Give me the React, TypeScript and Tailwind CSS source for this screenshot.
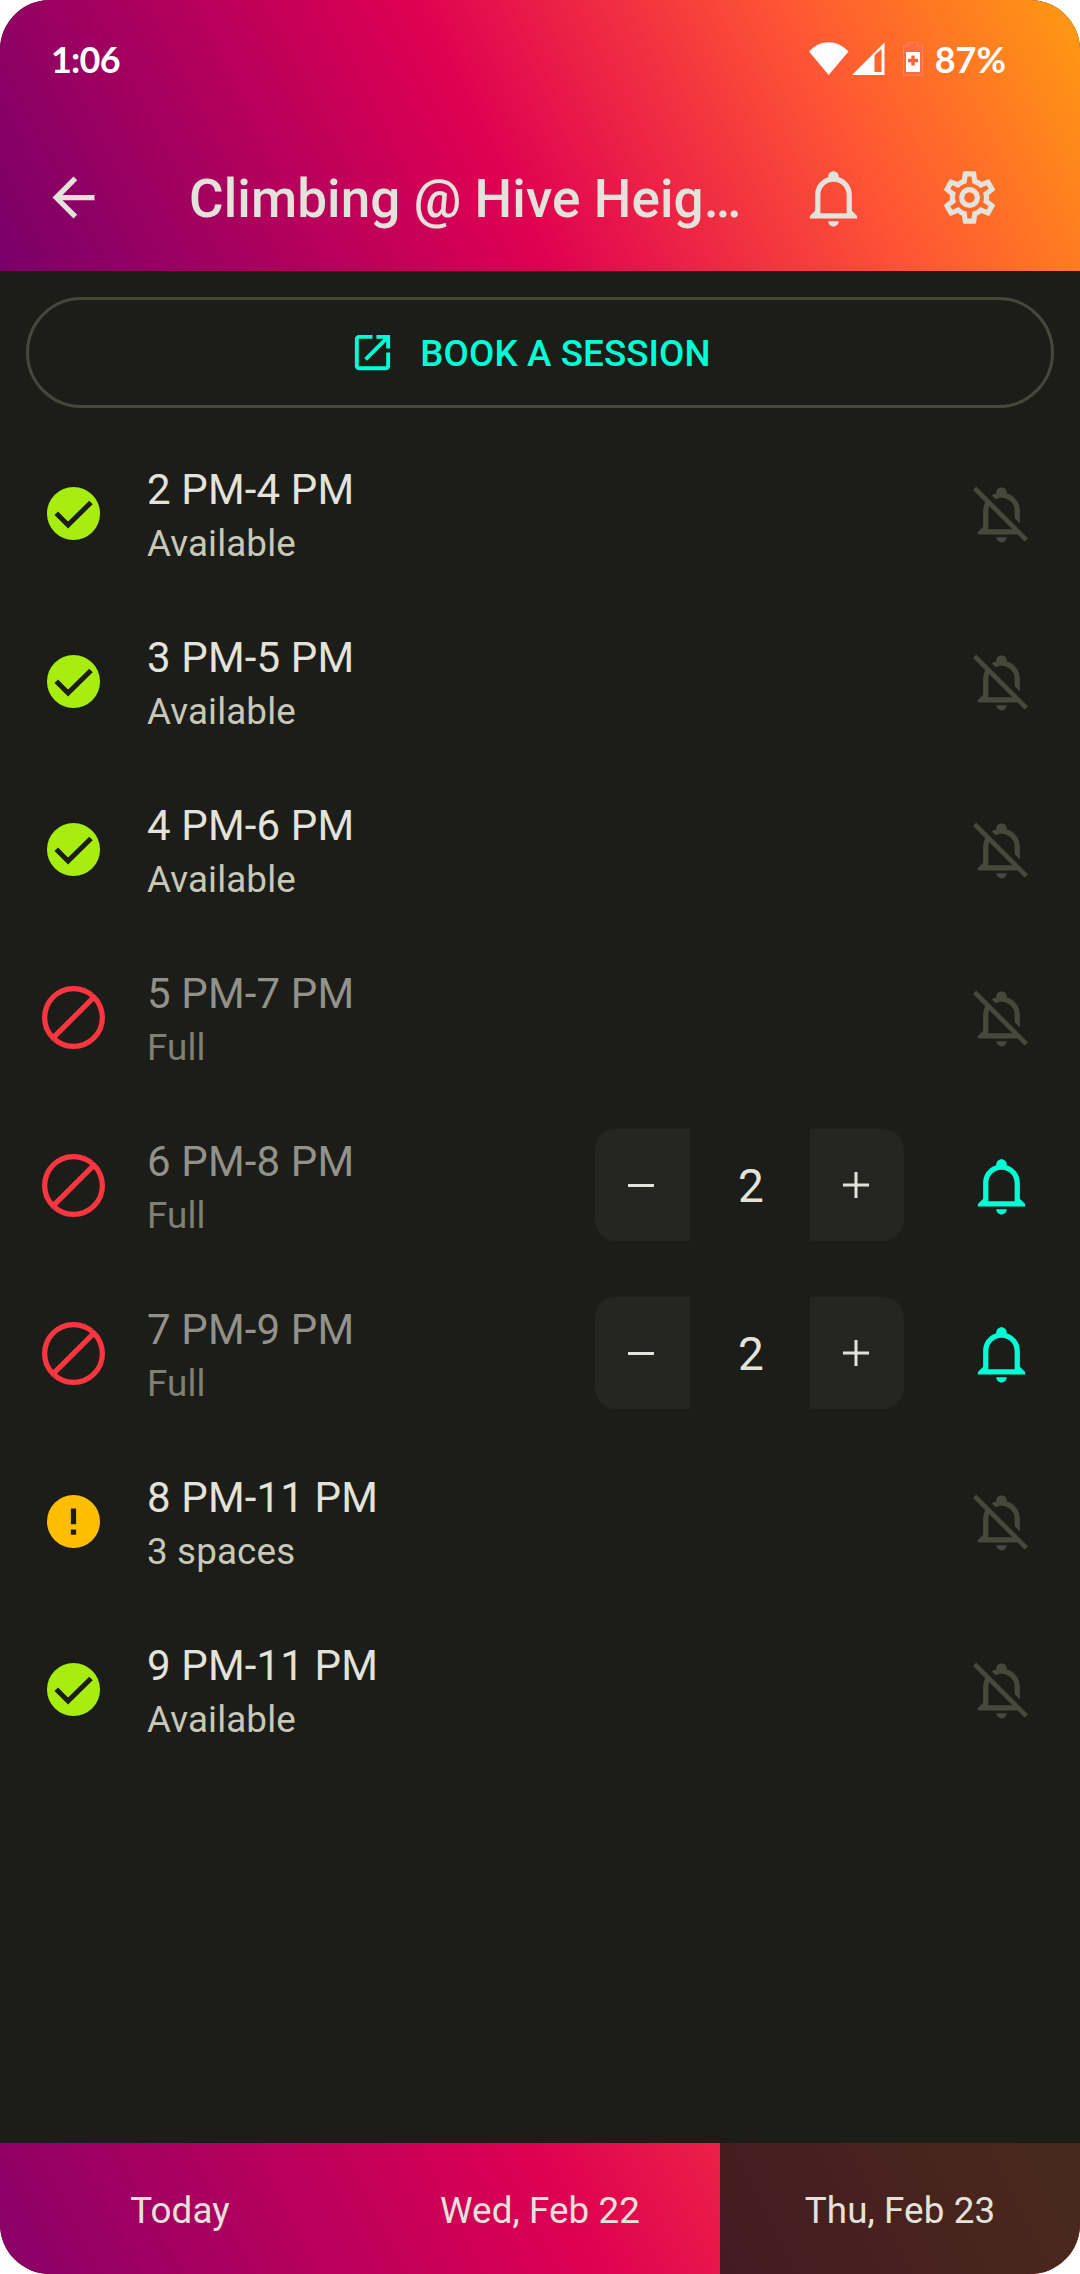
import React from "react";

type Status = "available" | "full" | "limited";
type Slot = { time: string; note: string; status: Status; watching?: number };

const slots: Slot[] = [
  { time: "2 PM-4 PM", note: "Available", status: "available" },
  { time: "3 PM-5 PM", note: "Available", status: "available" },
  { time: "4 PM-6 PM", note: "Available", status: "available" },
  { time: "5 PM-7 PM", note: "Full", status: "full" },
  { time: "6 PM-8 PM", note: "Full", status: "full", watching: 2 },
  { time: "7 PM-9 PM", note: "Full", status: "full", watching: 2 },
  { time: "8 PM-11 PM", note: "3 spaces", status: "limited" },
  { time: "9 PM-11 PM", note: "Available", status: "available" },
];

const paths = {
  back: "M20 11H7.83l5.59-5.59L12 4l-8 8 8 8 1.41-1.41L7.83 13H20v-2z",
  bell: "M10 21H14C14 22.1 13.1 23 12 23S10 22.1 10 21M21 19V20H3V19L5 17V11C5 7.9 7.03 5.17 10 4.29V4C10 2.9 10.9 2 12 2S14 2.9 14 4V4.29C16.97 5.17 19 7.9 19 11V17L21 19M17 11C17 8.24 14.76 6 12 6S7 8.24 7 11V18H17V11Z",
  bellOff:
    "M22.11,21.46L2.39,1.73L1.11,3L5.83,7.72C5.29,8.73 5,9.86 5,11V17L3,19V20H18.11L20.84,22.73L22.11,21.46M7,18V11C7,10.39 7.11,9.79 7.34,9.23L16.11,18H7M10,21H14A2,2 0 0,1 12,23A2,2 0 0,1 10,21M8.29,5.09C8.82,4.75 9.4,4.48 10,4.29C10,4.19 10,4.1 10,4A2,2 0 0,1 12,2A2,2 0 0,1 14,4C14,4.1 14,4.19 14,4.29C16.97,5.17 19,7.9 19,11V15.8L17,13.8V11A5,5 0 0,0 12,6C11.22,6 10.45,6.2 9.76,6.56L8.29,5.09Z",
  cog: "M12,8A4,4 0 0,1 16,12A4,4 0 0,1 12,16A4,4 0 0,1 8,12A4,4 0 0,1 12,8M12,10A2,2 0 0,0 10,12A2,2 0 0,0 12,14A2,2 0 0,0 14,12A2,2 0 0,0 12,10M10,22C9.75,22 9.54,21.82 9.5,21.58L9.13,18.93C8.5,18.68 7.96,18.34 7.44,17.94L4.95,18.95C4.73,19.03 4.46,18.95 4.34,18.73L2.34,15.27C2.21,15.05 2.27,14.78 2.46,14.63L4.57,12.97L4.5,12L4.57,11L2.46,9.37C2.27,9.22 2.21,8.95 2.34,8.73L4.34,5.27C4.46,5.05 4.73,4.96 4.95,5.05L7.44,6.05C7.96,5.66 8.5,5.32 9.13,5.07L9.5,2.42C9.54,2.18 9.75,2 10,2H14C14.25,2 14.46,2.18 14.5,2.42L14.87,5.07C15.5,5.32 16.04,5.66 16.56,6.05L19.05,5.05C19.27,4.96 19.54,5.05 19.66,5.27L21.66,8.73C21.79,8.95 21.73,9.22 21.54,9.37L19.43,11L19.5,12L19.43,13L21.54,14.63C21.73,14.78 21.79,15.05 21.66,15.27L19.66,18.73C19.54,18.95 19.27,19.04 19.05,18.95L16.56,17.95C16.04,18.34 15.5,18.68 14.87,18.93L14.5,21.58C14.46,21.82 14.25,22 14,22H10M11.25,4L10.88,6.61C9.68,6.86 8.62,7.5 7.85,8.39L5.44,7.35L4.69,8.65L6.8,10.2C6.4,11.37 6.4,12.64 6.8,13.8L4.68,15.36L5.43,16.66L7.86,15.62C8.63,16.5 9.68,17.14 10.87,17.38L11.24,20H12.76L13.13,17.39C14.32,17.14 15.37,16.5 16.14,15.62L18.57,16.66L19.32,15.36L17.2,13.81C17.6,12.64 17.6,11.37 17.2,10.2L19.31,8.65L18.56,7.35L16.15,8.39C15.38,7.5 14.32,6.86 13.12,6.62L12.75,4H11.25Z",
  open: "M19 19H5V5h7V3H5c-1.11 0-2 .9-2 2v14c0 1.1.89 2 2 2h14c1.1 0 2-.9 2-2v-7h-2v7zM14 3v2h3.59l-9.83 9.83 1.41 1.41L19 6.41V10h2V3h-7z",
};

function Icon({ d, className }: { d: string; className: string }) {
  return (
    <svg viewBox="0 0 24 24" fill="currentColor" className={`shrink-0 ${className}`}>
      <path d={d} />
    </svg>
  );
}

function StatusIcon({ status }: { status: Status }) {
  return (
    <svg viewBox="0 0 24 24" className="size-[63px] shrink-0">
      {status === "available" && (
        <>
          <circle cx="12" cy="12" r="10.1" fill="#a8ed10" />
          <path d="M4.7 11.9l5 5L19.4 7.3" transform="translate(1.2 1.2) scale(.9)" fill="none" stroke="#1c1d18" strokeWidth="2.1" />
        </>
      )}
      {status === "limited" && (
        <>
          <circle cx="12" cy="12" r="10.1" fill="#ffbf00" />
          <path d="M11 7h2v6h-2zM11 15h2v2h-2z" fill="#1c1d18" />
        </>
      )}
      {status === "full" && (
        <g fill="none" stroke="#fb3640" strokeWidth="2">
          <circle cx="12" cy="12" r="11" />
          <path d="M4.5 19.5l15-15" />
        </g>
      )}
    </svg>
  );
}

function Stepper({ value }: { value: number }) {
  return (
    <div className="mr-[66px] flex h-[112px] w-[309px] text-[#e4e3db]">
      <button className="flex w-[95px] items-center justify-center rounded-l-[21px] bg-[#252622] pr-[3px]">
        <span className="h-[3px] w-[26px] bg-current" />
      </button>
      <span className="flex flex-1 items-center justify-center pt-[2px] pl-[2px] text-[46px] leading-none">{value}</span>
      <button className="flex w-[94px] items-center justify-center rounded-r-[21px] bg-[#252622] pr-[2px]">
        <svg viewBox="0 0 26 26" className="size-[26px]" stroke="currentColor" strokeWidth="3">
          <path d="M0 13h26M13 0v26" />
        </svg>
      </button>
    </div>
  );
}

function SlotRow({ slot }: { slot: Slot }) {
  const full = slot.status === "full";
  return (
    <li className="flex h-[168px] items-center pr-[47px] pl-[42px]">
      <StatusIcon status={slot.status} />
      <div className="ml-[42px] flex-1 pt-[6px]">
        <div className={`text-[42px] leading-[56px] tracking-[0.15px] ${full ? "text-[#92918a]" : "text-[#e4e3db]"}`}>{slot.time}</div>
        <div className={`text-[36.75px] leading-[52px] tracking-[0.15px] ${full ? "text-[#7f8075]" : "text-[#c7c8b9]"}`}>{slot.note}</div>
      </div>
      {slot.watching !== undefined && <Stepper value={slot.watching} />}
      <Icon
        d={slot.watching !== undefined ? paths.bell : paths.bellOff}
        className={slot.watching !== undefined ? "size-[63px] text-[#00ffd5]" : "size-[63px] text-[#46483c]"}
      />
    </li>
  );
}

function StatusBar() {
  return (
    <div className="flex h-[117px] items-center pr-[74px] pl-[51px] font-['Lato',sans-serif] text-[36px] leading-none font-bold text-white">
      <span className="tracking-[-0.8px]">1:06</span>
      <svg viewBox="0 0 116 34" className="mr-[11px] ml-auto h-[34px] w-[116px]">
        <path d="M1 9.5C12-3 29-3 40.500 9.500L20.700 33z" fill="#fff" />
        <path d="M76.500 0.500V33H44zM66.500 13V30H73.500V7z" fill="#fff" fillRule="evenodd" />
        <path d="M100.500 0.800h9v3h5v29.500h-19v-29.500h5z" fill="#ff6a45" stroke="#ff8a66" strokeWidth=".8" />
        <path d="M98 10h14v20h-14z" fill="#fff" />
        <path d="M105 13.500v10M100 18.500h10" stroke="#ff6238" strokeWidth="3.400" />
      </svg>
      <span>87%</span>
    </div>
  );
}

export default function App() {
  return (
    <div className="flex h-[2274px] w-[1080px] flex-col overflow-hidden rounded-[50px] bg-[#1c1d18] font-['Roboto',sans-serif]">
      <header className="h-[271px] shrink-0 bg-[linear-gradient(63deg,#780069_0%,#df0052_45%,#ff5733_76%,#ff9b12_100%)]">
        <StatusBar />
        <div className="flex h-[161px] items-center pr-[79px] pl-[42px] text-[#e4e3db]">
          <Icon d={paths.back} className="size-[63px]" />
          <h1 className="ml-[84px] pt-[3px] text-[53px] leading-[64px] font-medium tracking-[0.1px] whitespace-nowrap">
            Climbing @ Hive Heig…
          </h1>
          <Icon d={paths.bell} className="ml-auto size-[63px]" />
          <Icon d={paths.cog} className="ml-[73px] size-[63px]" />
        </div>
      </header>

      <main className="flex-1 pt-[26px]">
        <button className="mx-[26px] flex h-[111px] w-[1028px] items-center justify-center gap-[24px] rounded-full border-[3px] border-[#46483c] pr-[20px] text-[36.75px] font-medium text-[#00ffd5]">
          <Icon d={paths.open} className="size-[47px]" />
          <span className="pt-[3px] tracking-[0.1px]">BOOK A SESSION</span>
        </button>
        <ul className="mt-[21px]">
          {slots.map((s) => (
            <SlotRow key={s.time} slot={s} />
          ))}
        </ul>
      </main>

      <nav className="grid h-[131px] shrink-0 grid-cols-3 bg-[linear-gradient(63deg,#880068_0%,#df0052_52%,#ff5733_96%)] text-[36.75px] tracking-[0.1px] text-[#e4e3db]">
        <button className="pt-[4px]">Today</button>
        <button className="pt-[4px]">Wed, Feb 22</button>
        <button className="bg-[#1c1d18]/80 pt-[4px]">Thu, Feb 23</button>
      </nav>
    </div>
  );
}
